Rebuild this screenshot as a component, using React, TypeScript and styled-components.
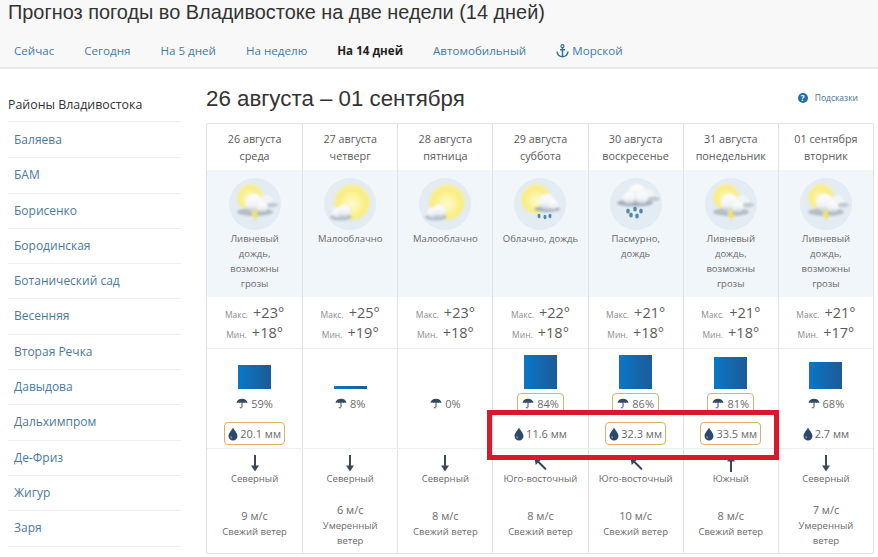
import React from "react";
import styled, { createGlobalStyle } from "styled-components";

const Global = createGlobalStyle`
  html, body { margin: 0; padding: 0; background: #fff; overflow: hidden; }
  body { font-family: "Liberation Sans", Arial, sans-serif; color: #333; }
`;

const Page = styled.div`
  position: relative;
  width: 878px;
  height: 557px;
  overflow: hidden;
`;

const Header = styled.header`
  height: 67px;
  background: #f8f8f8;
  border-bottom: 2px solid #e9e9e9;
  padding-left: 8px;
`;

const Title = styled.h1`
  margin: 0;
  font-size: 19.9px;
  line-height: 24px;
  font-weight: 400;
  color: #333;
`;

const Nav = styled.nav`
  display: flex;
  gap: 30px;
  margin-top: 18px;
  padding-left: 6px;
`;

const NavLink = styled.a<{ $active?: boolean }>`
  display: flex;
  align-items: center;
  gap: 3px;
  font-family: "Open Sans", sans-serif;
  font-size: 11.6px;
  line-height: 18px;
  font-weight: ${(p) => (p.$active ? 700 : 400)};
  color: ${(p) => (p.$active ? "#222" : "#3f7ca5")};
`;

const Body = styled.div`
  display: flex;
  padding: 15px 4px 0 8px;
`;

const Sidebar = styled.aside`
  width: 173px;
  flex: none;
  margin-right: 25px;
`;

const SideTitle = styled.div`
  font-family: "Open Sans", sans-serif;
  font-size: 12.4px;
  line-height: 20px;
  height: 26px;
  padding-top: 11px;
  margin-bottom: 1px;
  color: #333;
  border-bottom: 1px solid #eee;
`;

const SideItem = styled.a`
  display: block;
  height: 34.3px;
  line-height: 34px;
  padding-left: 6px;
  font-family: "Open Sans", sans-serif;
  font-size: 12px;
  color: #4b7a9c;
  border-bottom: 1px solid #eee;
`;

const Main = styled.main`
  flex: 1;
  min-width: 0;
`;

const WeekHead = styled.div`
  display: flex;
  align-items: center;
  justify-content: space-between;
  height: 31px;
  padding-right: 16px;
`;

const WeekTitle = styled.h2`
  margin: 0 0 2px;
  font-size: 22.3px;
  font-weight: 400;
  color: #333;
`;

const Hint = styled.a`
  display: flex;
  align-items: center;
  gap: 7px;
  padding-bottom: 4px;
  font-family: "Open Sans", sans-serif;
  font-size: 8.5px;
  color: #3f6f92;
`;

const HintDot = styled.span`
  width: 10px;
  height: 10px;
  border-radius: 50%;
  background: #1f6fae;
  color: #fff;
  font-size: 8px;
  font-weight: 700;
  line-height: 10px;
  text-align: center;
`;

const Table = styled.div`
  margin-top: 8px;
  width: 666px;
  border: 1px solid #dfe3e6;
  border-radius: 2px;
`;

const Row = styled.div<{ $h: number; $bg?: string; $line?: boolean }>`
  display: grid;
  grid-template-columns: repeat(7, 1fr);
  height: ${(p) => p.$h}px;
  background: ${(p) => p.$bg || "transparent"};
  border-bottom: ${(p) => (p.$line ? "1px solid #eceef0" : "none")};
`;

const Cell = styled.div`
  display: flex;
  flex-direction: column;
  align-items: center;
  font-family: "Open Sans", sans-serif;
  color: #666;
  text-align: center;
  border-left: 1px solid #dfe3e6;
  min-width: 0;
  &:first-child { border-left: none; }
`;

const DayCell = styled(Cell)`
  padding-top: 6px;
  font-size: 10.8px;
  line-height: 17px;
  color: #5a5a5a;
`;

const IconWrap = styled.div`
  margin-top: 8px;
  width: 52px;
  height: 52px;
`;

const Sky = styled.div`
  margin-top: 1px;
  width: 78px;
  font-size: 9.5px;
  line-height: 15px;
  color: #6a6a6a;
`;

const TempCell = styled(Cell)`
  padding-top: 6px;
`;

const Temp = styled.div`
  display: flex;
  align-items: baseline;
  gap: 5px;
  height: 20px;
  font-size: 14.5px;
  line-height: 20px;
  color: #5c5c5c;
  & small {
    font-size: 8.5px;
    color: #8c8c8c;
  }
`;

const RainCell = styled(Cell)`
  padding-top: 0;
`;

const BarBox = styled.div`
  height: 40px;
  display: flex;
  align-items: flex-end;
  margin-bottom: 4px;
`;

const Bar = styled.div`
  width: 33px;
  background: linear-gradient(90deg, #0878c8, #1e5a96);
`;

const Chance = styled.div<{ $hot?: boolean }>`
  display: flex;
  align-items: center;
  justify-content: center;
  gap: 3px;
  height: 21px;
  padding: 0 4px;
  font-size: 11px;
  color: #6a6a6a;
  box-sizing: border-box;
  border: 1.5px solid ${(p) => (p.$hot ? "#d9b06e" : "transparent")};
  border-radius: 4px;
`;

const Amount = styled.div<{ $hot?: boolean }>`
  display: flex;
  align-items: center;
  justify-content: center;
  gap: 2px;
  margin-top: 8px;
  height: 23px;
  padding: 0 3px;
  font-size: 11px;
  color: #6a6a6a;
  box-sizing: border-box;
  border: 1.5px solid ${(p) => (p.$hot ? "#d9b06e" : "transparent")};
  border-radius: 4px;
`;

const WindCell = styled(Cell)`
  padding-top: 6px;
  font-size: 9.5px;
  color: #6a6a6a;
`;

const WindName = styled.div`
  height: 16px;
  margin-top: -1px;
  line-height: 16px;
`;

const WindSpeed = styled.div<{ $tall?: boolean }>`
  margin-top: ${(p) => (p.$tall ? 15 : 21)}px;
  font-size: 11px;
  line-height: 16px;
`;

const WindNote = styled.div`
  width: 78px;
  font-size: 9.5px;
  line-height: 15px;
`;

const Marker = styled.div`
  position: absolute;
  left: 487px;
  top: 410px;
  width: 292px;
  height: 50px;
  box-sizing: border-box;
  border: 5px solid #d9182c;
  pointer-events: none;
`;

type Kind = "storm" | "sun" | "cloudRain" | "rain";

const Umbrella = () => (
  <svg width="12" height="11" viewBox="0 0 12 11">
    <path d="M.5 5C1 2.2 3.2.8 6 .8s5 1.4 5.500 4.200C10.300 4.200 9.200 4.200 8.300 5 7.500 4.200 6.700 4.200 6 5c-.7-.8-1.500-.8-2.300 0C2.800 4.200 1.700 4.200.5 5Z" fill="#34495e" />
    <path d="M6 4.500v4.300c0 1.400-1.900 1.400-2 .2" fill="none" stroke="#34495e" strokeWidth="1" />
  </svg>
);

const Drop = () => (
  <svg width="10" height="14" viewBox="0 0 10 14">
    <path fillRule="evenodd" d="M5 .5C6 3 9.500 6 9.500 9A4.500 4.500 0 0 1 .5 9C.5 6 4 3 5 .5ZM3.200 8.500A2 2 0 0 0 4 11.500 3 3 0 0 1 3.200 8.500Z" fill="#2b4a6b" />
  </svg>
);

const WindArrow = ({ deg }: { deg: number }) => (
  <svg width="12" height="17" viewBox="0 0 12 17" style={{ transform: `rotate(${deg}deg)` }}>
    <path d="M6 0v13" stroke="#3a4a5a" strokeWidth="2" />
    <path d="M2 10.500h8L6 16.500Z" fill="#3a4a5a" />
  </svg>
);

const Anchor = () => (
  <svg width="13" height="14" viewBox="0 0 13 14">
    <circle cx="6.500" cy="2.200" r="1.500" fill="none" stroke="#2d6da3" strokeWidth="1.200" />
    <path d="M6.500 3.500V12.800M4 5.800h5M1 7.500c.3 3.200 2.500 5 5.500 5.300 3-.3 5.200-2.100 5.500-5.300" fill="none" stroke="#2d6da3" strokeWidth="1.400" />
  </svg>
);

const WeatherIcon = ({ kind, id }: { kind: Kind; id: number }) => {
  const sun = kind === "sun";
  const cloudOnly = kind === "rain";
  return (
    <svg width="52" height="52" viewBox="0 0 52 52">
      <defs>
        <radialGradient id={`s${id}`} cx="0.5" cy="0.55" r="0.55">
          <stop offset="0" stopColor="#fffbd0" />
          <stop offset="0.7" stopColor="#f9ee80" />
          <stop offset="1" stopColor="#f6efb0" />
        </radialGradient>
        <linearGradient id={`c${id}`} x1="0" y1="0" x2="0" y2="1">
          <stop offset="0" stopColor="#ffffff" />
          <stop offset="0.65" stopColor="#eef2f5" />
          <stop offset="1" stopColor="#bcc6ce" />
        </linearGradient>
        <filter id={`b${id}`}>
          <feGaussianBlur stdDeviation="0.8" />
        </filter>
      </defs>
      <circle cx="26" cy="26" r="26" fill="#e3ebf3" />
      <g filter={`url(#b${id})`}>
        {sun && (
          <>
            <circle cx="28" cy="24" r="18" fill={`url(#s${id})`} />
            <ellipse cx="17" cy="39" rx="11" ry="3.500" fill="#b4c1cb" />
            <circle cx="13" cy="35" r="5" fill={`url(#c${id})`} />
            <circle cx="20" cy="33" r="6.500" fill={`url(#c${id})`} />
          </>
        )}
        {kind === "storm" && (
          <>
            <circle cx="21" cy="19" r="13" fill={`url(#s${id})`} />
            <ellipse cx="26" cy="34" rx="18" ry="4" fill="#b4bec7" />
            <circle cx="38" cy="23" r="6" fill="#f2f5f7" />
            <ellipse cx="43" cy="27" rx="6" ry="2.200" fill="#bfc9d1" />
            <circle cx="25" cy="25" r="9" fill={`url(#c${id})`} />
            <circle cx="33" cy="29" r="5.500" fill={`url(#c${id})`} />
            <path d="M23 32h6l-2 5h3l-5 7 1-5h-3Z" fill="#efe36a" />
          </>
        )}
        {kind === "cloudRain" && (
          <>
            <circle cx="22" cy="21" r="15" fill={`url(#s${id})`} />
            <ellipse cx="33" cy="31" rx="13" ry="3" fill="#a5b1bb" />
            <circle cx="33" cy="24" r="8" fill={`url(#c${id})`} />
            <circle cx="39" cy="27" r="5" fill={`url(#c${id})`} />
          </>
        )}
        {cloudOnly && (
          <>
            <circle cx="38" cy="17" r="6" fill="#f2f5f7" />
            <ellipse cx="43" cy="21" rx="7" ry="2.200" fill="#bfc9d1" />
            <ellipse cx="25" cy="25" rx="18" ry="3.500" fill="#a5b1bb" />
            <circle cx="27" cy="15" r="9" fill={`url(#c${id})`} />
            <circle cx="19" cy="20" r="6" fill={`url(#c${id})`} />
            <circle cx="32" cy="20" r="6" fill={`url(#c${id})`} />
          </>
        )}
      </g>
      {kind === "cloudRain" &&
        [[25, 38], [31, 39], [36, 38]].map(([x, y]) => (
          <ellipse key={x} cx={x} cy={y} rx="1.500" ry="2.200" fill="#4f87ad" />
        ))}
      {cloudOnly &&
        [[18, 33], [25, 31], [31, 33], [21, 37], [27, 38]].map(([x, y]) => (
          <ellipse key={`${x}-${y}`} cx={x} cy={y} rx="1.800" ry="2.600" fill="#4f87ad" />
        ))}
    </svg>
  );
};

const districts = [
  "Баляева", "БАМ", "Борисенко", "Бородинская", "Ботанический сад", "Весенняя",
  "Вторая Речка", "Давыдова", "Дальхимпром", "Де-Фриз", "Жигур", "Заря",
];

const days = [
  { date: "26 августа", day: "среда", kind: "storm" as Kind, sky: "Ливневый дождь, возможны грозы", max: 23, min: 18, chance: 59, mm: "20.1", hotMm: true, dir: "Северный", deg: 0, speed: 9, note: "Свежий ветер" },
  { date: "27 августа", day: "четверг", kind: "sun" as Kind, sky: "Малооблачно", max: 25, min: 19, chance: 8, dir: "Северный", deg: 0, speed: 6, note: "Умеренный ветер" },
  { date: "28 августа", day: "пятница", kind: "sun" as Kind, sky: "Малооблачно", max: 23, min: 18, chance: 0, dir: "Северный", deg: 0, speed: 8, note: "Свежий ветер" },
  { date: "29 августа", day: "суббота", kind: "cloudRain" as Kind, sky: "Облачно, дождь", max: 22, min: 18, chance: 84, hotChance: true, mm: "11.6", dir: "Юго-восточный", deg: 135, speed: 8, note: "Свежий ветер" },
  { date: "30 августа", day: "воскресенье", kind: "rain" as Kind, sky: "Пасмурно, дождь", max: 21, min: 18, chance: 86, hotChance: true, mm: "32.3", hotMm: true, dir: "Юго-восточный", deg: 135, speed: 10, note: "Свежий ветер" },
  { date: "31 августа", day: "понедельник", kind: "storm" as Kind, sky: "Ливневый дождь, возможны грозы", max: 21, min: 18, chance: 81, hotChance: true, mm: "33.5", hotMm: true, dir: "Южный", deg: 180, speed: 8, note: "Свежий ветер" },
  { date: "01 сентября", day: "вторник", kind: "storm" as Kind, sky: "Ливневый дождь, возможны грозы", max: 21, min: 17, chance: 68, mm: "2.7", dir: "Северный", deg: 0, speed: 7, note: "Умеренный ветер" },
];

const navItems = ["Сейчас", "Сегодня", "На 5 дней", "На неделю", "На 14 дней", "Автомобильный"];

export default function App() {
  return (
    <Page>
      <Global />
      <Header>
        <Title>Прогноз погоды во Владивостоке на две недели (14 дней)</Title>
        <Nav>
          {navItems.map((n) => (
            <NavLink key={n} $active={n === "На 14 дней"}>{n}</NavLink>
          ))}
          <NavLink><Anchor />Морской</NavLink>
        </Nav>
      </Header>
      <Body>
        <Sidebar>
          <SideTitle>Районы Владивостока</SideTitle>
          {districts.map((d) => <SideItem key={d}>{d}</SideItem>)}
        </Sidebar>
        <Main>
          <WeekHead>
            <WeekTitle>26 августа – 01 сентября</WeekTitle>
            <Hint><HintDot>?</HintDot>Подсказки</Hint>
          </WeekHead>
          <Table>
            <Row $h={46}>
              {days.map((d) => (
                <DayCell key={d.date}><div>{d.date}</div><div>{d.day}</div></DayCell>
              ))}
            </Row>
            <Row $h={127} $bg="#f1f6fb">
              {days.map((d, i) => (
                <Cell key={d.date}>
                  <IconWrap><WeatherIcon kind={d.kind} id={i} /></IconWrap>
                  <Sky>{d.sky}</Sky>
                </Cell>
              ))}
            </Row>
            <Row $h={51} $line>
              {days.map((d) => (
                <TempCell key={d.date}>
                  <Temp><small>Макс.</small>+{d.max}°</Temp>
                  <Temp><small>Мин.</small>+{d.min}°</Temp>
                </TempCell>
              ))}
            </Row>
            <Row $h={99} $line>
              {days.map((d) => (
                <RainCell key={d.date}>
                  <BarBox><Bar style={{ height: Math.round(d.chance * 0.4) }} /></BarBox>
                  <Chance $hot={d.hotChance}><Umbrella />{d.chance}%</Chance>
                  {d.mm && <Amount $hot={d.hotMm}><Drop />{d.mm} мм</Amount>}
                </RainCell>
              ))}
            </Row>
            <Row $h={104}>
              {days.map((d) => (
                <WindCell key={d.date}>
                  <WindArrow deg={d.deg} />
                  <WindName>{d.dir}</WindName>
                  <WindSpeed $tall={d.note.length > 13}>{d.speed} м/с</WindSpeed>
                  <WindNote>{d.note}</WindNote>
                </WindCell>
              ))}
            </Row>
          </Table>
        </Main>
      </Body>
      <Marker />
    </Page>
  );
}
